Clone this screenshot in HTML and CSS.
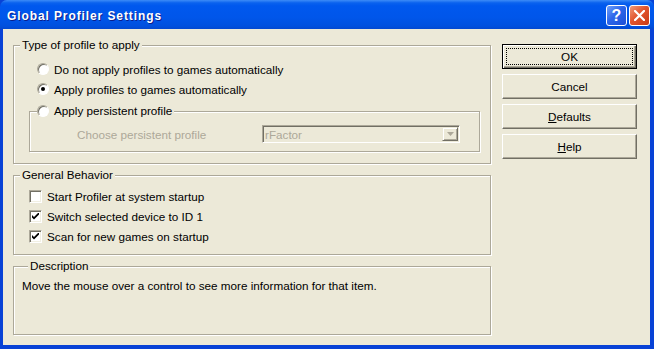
FILE: index.html
```html
<!DOCTYPE html>
<html lang="en">
<head>
  <meta charset="UTF-8">
  <title>Global Profiler Settings</title>
  <link rel="stylesheet" href="styles.css">
</head>
<body>
  <div class="window">
    <!-- Barra de título -->
    <div class="titlebar">
      <span class="title">Global Profiler Settings</span>
      <div class="caption-buttons">
        <span class="cap help">?</span>
        <span class="cap close">
          <svg width="11" height="11" viewBox="0 0 11 11"><path d="M1 1 L10 10 M10 1 L1 10" stroke="#fff" stroke-width="2.2" stroke-linecap="square"/></svg>
        </span>
      </div>
    </div>

    <div class="client">
      <div class="groups">
        <!-- Tipo de perfil -->
        <fieldset class="group type-group">
          <legend>Type of profile to apply</legend>
          <label class="option"><span class="radio"></span>Do not apply profiles to games automatically</label>
          <label class="option"><span class="radio checked"></span>Apply profiles to games automatically</label>
          <fieldset class="group inner-group">
            <legend><label class="option"><span class="radio"></span>Apply persistent profile</label></legend>
            <div class="choose-row">
              <span class="disabled-label">Choose persistent profile</span>
              <div class="combo">
                <span class="combo-text">rFactor</span>
                <span class="combo-arrow"><svg width="7" height="4" viewBox="0 0 7 4"><path d="M0 0 H7 L3.5 4 Z" fill="#ACA899"/></svg></span>
              </div>
            </div>
          </fieldset>
        </fieldset>

        <!-- Comportamiento general -->
        <fieldset class="group behavior-group">
          <legend>General Behavior</legend>
          <label class="option check-row"><span class="check"></span>Start Profiler at system startup</label>
          <label class="option check-row"><span class="check checked"><svg width="7" height="7" viewBox="0 0 7 7"><path d="M0 2 L0 4.5 L2 6.5 L7 1.5 L7 -1 L2 4 Z" fill="#000"/></svg></span>Switch selected device to ID 1</label>
          <label class="option check-row"><span class="check checked"><svg width="7" height="7" viewBox="0 0 7 7"><path d="M0 2 L0 4.5 L2 6.5 L7 1.5 L7 -1 L2 4 Z" fill="#000"/></svg></span>Scan for new games on startup</label>
        </fieldset>

        <!-- Descripción -->
        <fieldset class="group desc-group">
          <legend>Description</legend>
          <p class="desc-text">Move the mouse over a control to see more information for that item.</p>
        </fieldset>
      </div>

      <div class="buttons">
        <button class="btn default"><span class="focus">OK</span></button>
        <button class="btn"><span class="focus none">Cancel</span></button>
        <button class="btn"><span class="focus none"><u>D</u>efaults</span></button>
        <button class="btn"><span class="focus none"><u>H</u>elp</span></button>
      </div>
    </div>
  </div>
</body>
</html>
```

FILE: styles.css
```css
html, body {
  margin: 0;
  padding: 0;
  background: #ECE9D8;
}

body {
  font-family: "Liberation Sans", Arial, sans-serif;
  font-size: 11.7px;
  color: #000;
}

.window {
  width: 654px;
  height: 349px;
  box-sizing: border-box;
  display: flex;
  flex-direction: column;
  background: #0842D6;
}

.titlebar {
  height: 29px;
  flex: none;
  display: flex;
  align-items: center;
  justify-content: space-between;
  padding: 0 4px 0 7px;
  background: linear-gradient(#3D8CF7 0%, #0A62EE 10%, #0058EE 20%, #0056EA 60%, #0050DE 90%, #0348D0 100%);
  border-radius: 7px 7px 0 0;
}

.title {
  color: #fff;
  font-weight: bold;
  font-size: 12px;
  letter-spacing: 0.9px;
  text-shadow: 1px 1px #0A1E8C;
  margin-top: 2px;
}

.caption-buttons {
  display: flex;
  gap: 2px;
  margin-top: 2px;
}

.cap {
  width: 19px;
  height: 19px;
  border: 1px solid #fff;
  border-radius: 3px;
  display: flex;
  align-items: center;
  justify-content: center;
  color: #fff;
}

.help {
  background: linear-gradient(135deg, #6FA0FA 0%, #2C66EA 45%, #1E4FD6 100%);
  font-weight: bold;
  font-size: 16px;
  font-family: "Liberation Sans", Arial, sans-serif;
}

.close {
  background: linear-gradient(135deg, #F09A7A 0%, #E2552E 45%, #C83A14 100%);
}

.client {
  flex: 1;
  margin: 0 4px 4px 3px;
  background: #ECE9D8;
  display: flex;
  padding: 0 13px 0 10px;
}

.groups {
  width: 478px;
  flex: none;
}

.group {
  margin: 0;
  padding: 0;
  border: 1px solid #ACA899;
  box-shadow: inset 1px 1px #fff, 1px 1px #fff;
  min-width: 0;
}

.group > legend {
  margin-left: 6px;
  padding: 0 2px;
  line-height: 14px;
  background: #ECE9D8;
}

.type-group {
  margin-top: 9px;
  padding: 7px 0 11px 0;
}

.option {
  display: flex;
  align-items: center;
  height: 20px;
  margin-left: 23px;
  gap: 5px;
}

.radio {
  width: 10px;
  height: 10px;
  border: 1px solid;
  border-color: #ACA899 #fff #fff #ACA899;
  border-radius: 50%;
  background: #fff;
  box-shadow: inset 1px 1px #716F64;
  display: flex;
  align-items: center;
  justify-content: center;
  flex: none;
}

.radio.checked::after {
  content: "";
  width: 4px;
  height: 4px;
  border-radius: 50%;
  background: #000;
}

.inner-group {
  margin: 2px 10px 0 15px;
  padding: 4px 0 8px 7px;
}

.inner-group > legend {
  margin-left: 0;
  padding: 0 2px 0 0;
  line-height: 20px;
}

.inner-group > legend .option {
  margin-left: 0;
}

.choose-row {
  display: flex;
  align-items: center;
  margin-left: 40px;
}

.disabled-label {
  width: 185px;
  color: #ACA899;
}

.combo {
  width: 198px;
  height: 18px;
  box-sizing: border-box;
  border: 1px solid;
  border-color: #ACA899 #fff #fff #ACA899;
  box-shadow: inset 1px 1px #716F64;
  display: flex;
  align-items: center;
  justify-content: space-between;
  padding: 1px 1px 1px 2px;
}

.combo-text {
  color: #ACA899;
}

.combo-arrow {
  width: 16px;
  height: 14px;
  box-sizing: border-box;
  border: 1px solid;
  border-color: #ECE9D8 #716F64 #716F64 #ECE9D8;
  box-shadow: inset 1px 1px #fff, inset -1px -1px #ACA899;
  display: flex;
  align-items: center;
  justify-content: center;
}

.behavior-group {
  margin-top: 4px;
  padding: 4px 0 8px 0;
}

.check-row {
  margin-left: 15px;
}

.check {
  width: 11px;
  height: 11px;
  border: 1px solid;
  border-color: #ACA899 #fff #fff #ACA899;
  box-shadow: inset 1px 1px #716F64, inset -1px -1px #F1EFE2;
  background: #fff;
  display: flex;
  align-items: center;
  justify-content: center;
  flex: none;
}

.desc-group {
  margin-top: 4px;
  padding: 6px 8px 41px 8px;
}

.desc-text {
  margin: 0;
  line-height: 14px;
}

.buttons {
  margin-left: 11px;
  padding-top: 15px;
  width: 135px;
  display: flex;
  flex-direction: column;
  gap: 5px;
}

.btn {
  height: 25px;
  width: 135px;
  padding: 3px;
  font: inherit;
  color: #000;
  background: #ECE9D8;
  border: 1px solid;
  border-color: #fff #716F64 #716F64 #fff;
  box-shadow: inset -1px -1px #ACA899;
  display: flex;
  cursor: pointer;
}

.btn.default {
  border-color: #000;
  box-shadow: inset 1px 1px #fff, inset -1px -1px #716F64, inset -2px -2px #ACA899;
}

.focus {
  flex: 1;
  display: flex;
  align-items: center;
  justify-content: center;
  border: 1px dotted #000;
}

.focus.none {
  border-color: transparent;
}
```
